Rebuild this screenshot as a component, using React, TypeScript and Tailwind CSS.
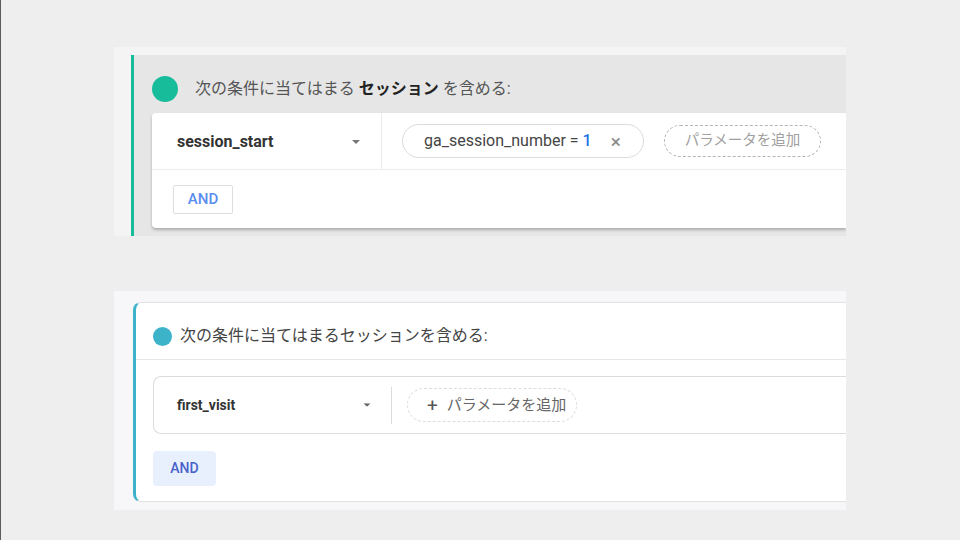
import { ReactNode } from 'react';

const font = { fontFamily: 'Roboto, "Noto Sans CJK JP", sans-serif' };

function Caret({ className = '' }: { className?: string }) {
  return (
    <svg className={className} width="8" height="4" viewBox="0 0 10 5">
      <path d="M0 0h10L5 5z" fill="currentColor" />
    </svg>
  );
}

function Section({ className, children }: { className: string; children: ReactNode }) {
  return <div className={`w-[732px] overflow-hidden ${className}`}>{children}</div>;
}

export default function App() {
  return (
    <div
      className="w-[960px] h-[540px] bg-[#eeeeee] border-l border-[#5c5c5c] pl-[113px] pt-[47px] flex flex-col"
      style={font}
    >
      {/* Top: old style condition */}
      <Section className="h-[189px] bg-[#f4f4f4] pt-[8px] pl-[17px]">
        <div className="h-full border-l-[3px] border-[#17bd9b] bg-[#e6e6e6] flex flex-col">
          <div className="h-[58px] flex items-center pl-[18px] pt-[10px] shrink-0">
            <div className="w-[26px] h-[26px] rounded-full bg-[#17bd9b]" />
            <span className="ml-[17px] text-[16px] text-[#555]">
              次の条件に当てはまる <b className="font-bold text-[#222]">セッション</b> を含める:
            </span>
          </div>
          <div className="ml-[18px] h-[115px] bg-white rounded-l-[4px] shadow-[0_2px_3px_rgba(0,0,0,0.25)] flex flex-col">
            <div className="h-[57px] flex border-b border-[#ececec]">
              <div className="w-[230px] flex items-center pl-[25px] pr-[21px] pt-[2px] border-r border-[#ececec]">
                <span className="text-[16px] font-bold text-[#333] flex-1">session_start</span>
                <Caret className="text-[#777]" />
              </div>
              <div className="flex items-center pl-[20px] gap-[20px]">
                <div className="w-[242px] h-[34px] rounded-full border border-[#dcdcdc] flex items-center pl-[21px] pr-[22px] text-[16px] text-[#444]">
                  <span className="flex-1">
                    ga_session_number = <span className="text-[#1a73e8] font-medium">1</span>
                  </span>
                  <span className="text-[#888] text-[19px] leading-none">×</span>
                </div>
                <div className="w-[157px] h-[32px] rounded-full border border-dashed border-[#b5b5b5] flex items-center justify-center text-[14.5px] text-[#a0a0a0]">
                  パラメータを追加
                </div>
              </div>
            </div>
            <div className="flex-1 flex items-center pl-[21px]">
              <div className="w-[60px] h-[29px] border border-[#dedede] rounded-[2px] flex items-center justify-center text-[15px] font-medium text-[#5b8def]">
                AND
              </div>
            </div>
          </div>
        </div>
      </Section>

      {/* Bottom: new style condition */}
      <Section className="mt-[55px] h-[219px] bg-[#f7f7f9] pt-[11px] pl-[19px]">
        <div className="h-[200px] bg-white border-l-[3px] border-y border-l-[#3db3ca] border-y-[#e2e2e2] rounded-l-[8px] flex flex-col">
          <div className="h-[57px] flex items-center pl-[17px] pt-[10px] border-b border-[#e6e6e6] shrink-0">
            <div className="w-[19px] h-[19px] rounded-full bg-[#3db3ca]" />
            <span className="ml-[8px] text-[16px] text-[#444]">次の条件に当てはまるセッションを含める:</span>
          </div>
          <div className="px-[17px] pt-[16px] flex flex-col">
            <div className="h-[58px] -mr-[17px] border border-r-0 border-[#dcdcdc] rounded-l-[8px] flex items-center">
              <div className="w-[237px] flex items-center pl-[23px] pr-[20px]">
                <span className="text-[14px] font-bold text-[#333] flex-1">first_visit</span>
                <Caret className="text-[#666] scale-90" />
              </div>
              <div className="w-px h-[37px] bg-[#dadada]" />
              <div className="ml-[15px] w-[170px] h-[34px] rounded-full border border-dashed border-[#dcdcdc] flex items-center pl-[19px] text-[15px] text-[#666]">
                <span className="text-[19px] leading-none text-[#555] mr-[9px]">+</span>
                パラメータを追加
              </div>
            </div>
            <div className="mt-[17px] w-[63px] h-[35px] rounded-[4px] bg-[#e8f0fe] flex items-center justify-center text-[14px] font-medium text-[#4a62c9]">
              AND
            </div>
          </div>
        </div>
      </Section>
    </div>
  );
}
